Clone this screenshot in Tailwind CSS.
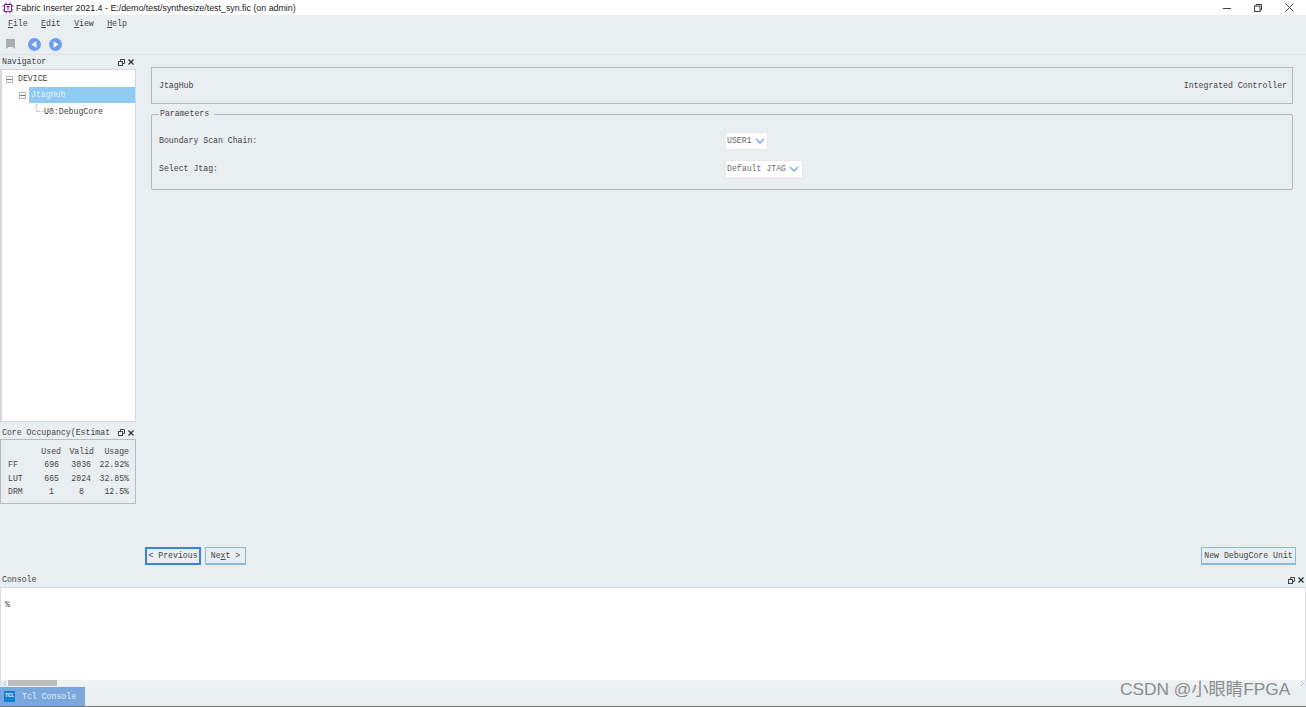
<!DOCTYPE html>
<html lang="en">
<head>
    <meta charset="UTF-8" />
    <title>Fabric Inserter</title>
    <script src="https://cdn.jsdelivr.net/npm/@tailwindcss/browser@4"></script>
</head>
<body class="bg-[#e9eef1]">
<div class="relative w-[1306px] h-[707px] overflow-hidden flex flex-col font-['Liberation_Mono',monospace] text-[8.2px] leading-[12px] text-[#444]">

    <!-- Title bar -->
    <div class="h-[15px] bg-white flex items-center shrink-0 font-['Liberation_Sans',sans-serif] text-[8.85px] text-[#222]">
        <svg class="ml-[2px] w-[12px] h-[12px]" viewBox="0 0 12 12" fill="none" stroke="#8a1f9c" stroke-width="1"><rect x="2.5" y="2.5" width="7" height="7"/><path d="M4 0.5V2.5M8 0.5V2.5M4 9.5V11.5M8 9.5V11.5M0.5 4H2.5M0.5 8H2.5M9.5 4H11.5M9.5 8H11.5M4.5 4.5H7.5M6 4.5V8"/></svg>
        <span class="ml-[2px]">Fabric Inserter 2021.4 - E:/demo/test/synthesize/test_syn.fic (on admin)</span>
        <div class="ml-auto flex items-center">
            <svg class="w-[8px] h-[8px] mr-[23px]" viewBox="0 0 8 8" stroke="#444" fill="none"><path d="M0 4.5H8"/></svg>
            <svg class="w-[8px] h-[8px] mr-[23px]" viewBox="0 0 8 8" stroke="#444" fill="none"><rect x="0.5" y="2" width="5.5" height="5.5"/><path d="M2 2V0.5H7.5V6H6"/></svg>
            <svg class="w-[9px] h-[9px] mr-[12px]" viewBox="0 0 9 9" stroke="#444" fill="none"><path d="M0.5 0.5L8.5 8.5M8.5 0.5L0.5 8.5"/></svg>
        </div>
    </div>

    <!-- Menu -->
    <div class="h-[16px] flex items-center shrink-0 pl-[8px] gap-[13.4px] mt-[1px]">
        <span><u>F</u>ile</span><span><u>E</u>dit</span><span><u>V</u>iew</span><span><u>H</u>elp</span>
    </div>

    <!-- Toolbar -->
    <div class="h-[23px] flex items-center shrink-0 pl-[6px] pt-[2px] border-b border-[#dfe3e5]">
        <svg class="w-[9px] h-[10px]" viewBox="0 0 9 10" fill="#a9aeb0"><path d="M0 0H9V10L6.5 8H2.5L0 10Z"/></svg>
        <svg class="w-[13px] h-[13px] ml-[13px]" viewBox="0 0 14 14"><circle cx="7" cy="7" r="7" fill="#6f9df0"/><path d="M9 3.5V10.5L4 7Z" fill="#fff"/></svg>
        <svg class="w-[13px] h-[13px] ml-[8px]" viewBox="0 0 14 14"><circle cx="7" cy="7" r="7" fill="#6f9df0"/><path d="M5 3.5V10.5L10 7Z" fill="#fff"/></svg>
    </div>

    <!-- Middle -->
    <div class="flex flex-1 min-h-0">
        <!-- Left docks -->
        <div class="w-[136px] shrink-0 flex flex-col">
            <div class="h-[14px] flex items-center justify-between pl-[2px] pr-[2px]">
                <span>Navigator</span>
                <span class="flex gap-[3px] items-center">
                    <svg class="w-[7px] h-[7px]" viewBox="0 0 7 7" fill="none" stroke="#444"><rect x="0.5" y="2.5" width="4" height="4"/><path d="M2.5 2.5V0.5H6.5V4.5H4.5"/></svg>
                    <svg class="w-[6px] h-[6px]" viewBox="0 0 6 6" fill="none" stroke="#333" stroke-width="1.3"><path d="M0.5 0.5L5.5 5.5M5.5 0.5L0.5 5.5"/></svg>
                </span>
            </div>
            <div class="h-[353px] bg-white border border-[#d5d8da] border-l-2 pt-[1px]">
                <div class="h-[16px] flex items-center pl-[4px]">
                    <span class="w-[7px] h-[7px] border border-[#b5b5b5] flex items-center justify-center"><span class="w-[5px] h-px bg-[#777]"></span></span>
                    <span class="ml-[5px]">DEVICE</span>
                </div>
                <div class="h-[16px] flex items-center pl-[17px]">
                    <span class="w-[7px] h-[7px] border border-[#b5b5b5] flex items-center justify-center"><span class="w-[5px] h-px bg-[#777]"></span></span>
                    <span class="ml-[3px] flex-1 h-[16px] bg-[#8ecaf2] text-[#e8f4fc] pl-[2px] flex items-center">JtagHub</span>
                </div>
                <div class="h-[17px] flex items-center pl-[34px]">
                    <span class="w-[8px] h-[8px] border-l border-b border-dotted border-[#bbb] -mt-[8px]"></span>
                    <span>U0:DebugCore</span>
                </div>
            </div>
            <div class="h-[13px] mt-[4px] flex items-center justify-between pl-[2px] pr-[2px]">
                <span class="whitespace-nowrap">Core Occupancy(Estimat</span>
                <span class="flex gap-[3px] items-center">
                    <svg class="w-[7px] h-[7px]" viewBox="0 0 7 7" fill="none" stroke="#444"><rect x="0.5" y="2.5" width="4" height="4"/><path d="M2.5 2.5V0.5H6.5V4.5H4.5"/></svg>
                    <svg class="w-[6px] h-[6px]" viewBox="0 0 6 6" fill="none" stroke="#333" stroke-width="1.3"><path d="M0.5 0.5L5.5 5.5M5.5 0.5L0.5 5.5"/></svg>
                </span>
            </div>
            <div class="h-[65px] border border-[#b9bcbe] pt-[5px]">
                <div class="grid grid-cols-[31px_22px_33px_35px] h-[13.5px] items-center text-right pl-[7px]"><span></span><span>Used</span><span>Valid</span><span>Usage</span></div>
                <div class="grid grid-cols-[31px_22px_33px_35px] h-[13.5px] items-center text-right pl-[7px]"><span class="text-left">FF</span><span class="pr-[2px]">696</span><span class="pr-[3px]">3036</span><span>22.92%</span></div>
                <div class="grid grid-cols-[31px_22px_33px_35px] h-[13.5px] items-center text-right pl-[7px]"><span class="text-left">LUT</span><span class="pr-[2px]">665</span><span class="pr-[3px]">2024</span><span>32.85%</span></div>
                <div class="grid grid-cols-[31px_22px_33px_35px] h-[13.5px] items-center text-right pl-[7px]"><span class="text-left">DRM</span><span class="pr-[7px]">1</span><span class="pr-[10px]">8</span><span>12.5%</span></div>
            </div>
        </div>

        <!-- Main panel -->
        <div class="flex-1 flex flex-col pl-[9px] pr-[10px]">
            <div class="ml-[6px] mr-[3px] mt-[12px] h-[37px] border border-[#b4b7b9] flex items-center justify-between pl-[7px] pr-[5px]">
                <span>JtagHub</span><span>Integrated Controller</span>
            </div>
            <fieldset class="ml-[6px] mr-[3px] mt-[4px] h-[82px] border border-[#b4b7b9] rounded-[2px] pl-[7px]">
                <legend class="ml-0 px-[1px] pr-[5px]">Parameters</legend>
                <div class="flex items-center h-[28px] mt-[7px]">
                    <span class="w-[566px]">Boundary Scan Chain:</span>
                    <span class="h-[18px] bg-white border border-[#e6e8ea] text-[#6a6a6a] flex items-center pl-[1px] pr-[2px]">USER1<svg class="w-[10px] h-[6px] ml-[3px]" viewBox="0 0 10 6" fill="none" stroke="#7aa6f5" stroke-width="1.3"><path d="M1 1L5 5L9 1"/></svg></span>
                </div>
                <div class="flex items-center h-[28px]">
                    <span class="w-[566px]">Select Jtag:</span>
                    <span class="h-[18px] bg-white border border-[#e6e8ea] text-[#6a6a6a] flex items-center pl-[1px] pr-[3px]">Default JTAG<svg class="w-[10px] h-[6px] ml-[3px]" viewBox="0 0 10 6" fill="none" stroke="#7aa6f5" stroke-width="1.3"><path d="M1 1L5 5L9 1"/></svg></span>
                </div>
            </fieldset>
            <div class="mt-auto mb-[8px] flex items-center">
                <button class="w-[56px] h-[18px] border-2 border-[#3d82e0] whitespace-nowrap">&lt; Previous</button>
                <button class="ml-[4px] w-[41px] h-[18px] border border-[#85b9dd] border-b-2 whitespace-nowrap">Ne<u>x</u>t &gt;</button>
                <button class="ml-auto w-[95px] h-[18px] border border-[#85b9dd] border-b-2 whitespace-nowrap">New DebugCore Unit</button>
            </div>
        </div>
    </div>

    <!-- Console -->
    <div class="h-[14px] flex items-center justify-between pl-[2px] pr-[2px] shrink-0">
        <span>Console</span>
        <span class="flex gap-[3px] items-center">
            <svg class="w-[7px] h-[7px]" viewBox="0 0 7 7" fill="none" stroke="#444"><rect x="0.5" y="2.5" width="4" height="4"/><path d="M2.5 2.5V0.5H6.5V4.5H4.5"/></svg>
            <svg class="w-[6px] h-[6px]" viewBox="0 0 6 6" fill="none" stroke="#333" stroke-width="1.3"><path d="M0.5 0.5L5.5 5.5M5.5 0.5L0.5 5.5"/></svg>
        </span>
    </div>
    <div class="h-[99px] shrink-0 bg-white border-t border-[#d9dcde] border-l border-r flex flex-col">
        <div class="flex-1 pl-[4px] pt-[11px]">%</div>
        <div class="h-[6px] bg-[#eff1f2] flex items-center">
            <svg class="ml-[2px] w-[3px] h-[5px]" viewBox="0 0 3 5" fill="none" stroke="#9db9f0"><path d="M3 0L0.5 2.5L3 5"/></svg>
            <span class="ml-[2px] w-[49px] h-[6px] bg-[#bcbcbc]"></span>
            <svg class="ml-auto mr-[1px] w-[3px] h-[5px]" viewBox="0 0 3 5" fill="none" stroke="#9db9f0"><path d="M0 0L2.5 2.5L0 5"/></svg>
        </div>
    </div>
    <div class="h-[20px] shrink-0 flex border-b border-[#777] mt-[1px]">
        <div class="w-[85px] bg-[#7aa7dc] flex items-center pl-[4px] text-[#e6f0fa]">
            <span class="w-[11px] h-[11px] bg-[#0f7fd0] text-white text-[5px] leading-[11px] text-center font-bold">TCL</span>
            <span class="ml-[7px]">Tcl Console</span>
        </div>
    </div>

    <!-- Watermark over the console -->
    <span class="absolute left-[1120px] top-[679px] text-[17.3px] leading-[20px] text-[#8c8c8c] font-['Liberation_Sans','Noto_Sans_CJK_SC',sans-serif] whitespace-nowrap">CSDN @小眼睛FPGA</span>
</div>
</body>
</html>
